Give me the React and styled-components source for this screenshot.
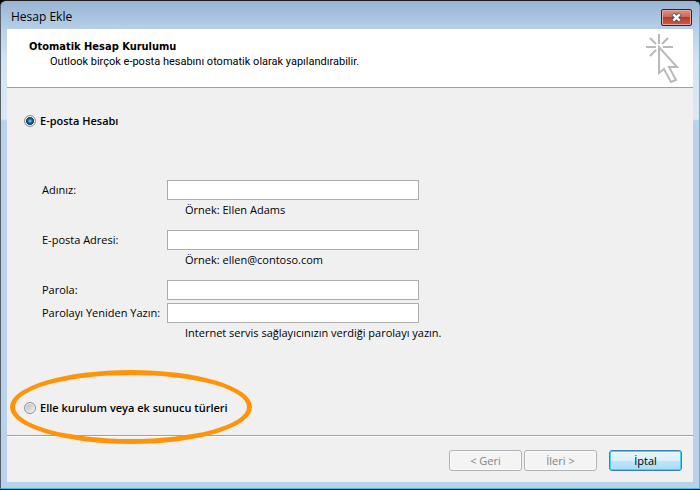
import React, { useState } from 'react'
import styled, { createGlobalStyle } from 'styled-components'

const GlobalStyle = createGlobalStyle`
  * {
    box-sizing: border-box;
  }
  body {
    margin: 0;
    background: #000;
    color: #000;
    font-family: 'Open Sans', 'Noto Sans', sans-serif;
    font-size: 11px;
    line-height: 20px;
  }
`

const Window = styled.div`
  display: flex;
  flex-direction: column;
  min-height: calc(100vh - 1px);
  padding: 0 6px 6px;
  border: 1px solid #1c1c1c;
  border-color: #1c1c1c #2fcbe8 #2fcbe8 #54606c;
  border-radius: 6px 6px 0 0;
  background: linear-gradient(#98b4d1, #b9d1ea 29px, #d3e3f3 60px, #dbe8f5 118px, #b9d1ea 120px);
`

const TitleBar = styled.div`
  display: flex;
  justify-content: space-between;
  align-items: center;
  height: 28px;
  padding: 4px 1px 0 4px;
`

const WindowTitle = styled.h1`
  margin: 0;
  font-size: 12px;
  font-weight: 400;
`

const CloseButton = styled.button`
  display: flex;
  justify-content: center;
  align-items: center;
  width: 31px;
  height: 17px;
  padding: 0;
  border: 1px solid #4a1c20;
  border-radius: 2px;
  box-shadow: inset 0 0 0 1px #e6a79c;
  background: linear-gradient(#dd9184, #cd6a5a 45%, #b63c2a 50%, #cb5d48);
`

const Dialog = styled.form`
  display: flex;
  flex-direction: column;
  flex: 1;
  background: #f0f0f0;
`

const Header = styled.header`
  display: flex;
  justify-content: space-between;
  height: 59px;
  padding: 4px 12px 0 22px;
  border-bottom: 1px solid #a0a0a0;
  background: #fff;
  line-height: 15px;
`

const HeaderText = styled.div`
  padding-top: 6px;
`

const Title = styled.h2`
  margin: 0;
  font-family: 'DejaVu Sans Condensed', 'DejaVu Sans', sans-serif;
  font-size: 11px;
`

const Subtitle = styled.p`
  margin: 0 0 0 21px;
  font-family: Roboto, sans-serif;
`

const Content = styled.main`
  flex: 1;
  padding: 23px 17px 0;
`

const RadioRow = styled.div`
  position: relative;
  display: flex;
  align-items: center;
  gap: 4px;
  font-weight: 600;
`

const Radio = styled.input`
  appearance: none;
  width: 12px;
  height: 12px;
  margin: 0;
  border: 1px solid #8e8f8f;
  border-radius: 50%;
  box-shadow: inset 0 0 0 1px #f4f4f4;
  background: linear-gradient(135deg, #b4b9be, #f4f4f4);
  &:checked {
    background: radial-gradient(circle at 5px 5px, #8fdcf5 0, #1d6c9c 2px, #0b2f52 4px, #d5dade 4px);
  }
`

const Highlight = styled.span`
  position: absolute;
  top: -28px;
  left: -14px;
  width: 242px;
  height: 74px;
  border: 5px solid #ff9409;
  border-radius: 50%;
  pointer-events: none;
`

const Fields = styled.div`
  display: flex;
  flex-direction: column;
  gap: 10px;
  margin: 49px 0 55px 18px;
`

const Group = styled.div`
  display: flex;
  flex-direction: column;
`

const Field = styled.div`
  display: grid;
  grid-template-columns: 125px minmax(0, 252px);
  & + & {
    margin-top: 3px;
  }
`

const TextBox = styled.input`
  width: 100%;
  height: 20px;
  padding: 0 4px;
  border: 1px solid #abadb3;
  background: #fff;
  font: inherit;
`

const Hint = styled.p`
  margin: 0 0 0 143px;
`

const Footer = styled.footer`
  display: flex;
  justify-content: flex-end;
  gap: 2px;
  padding: 14px 11px 11px;
  border-top: 1px solid #a0a0a0;
  box-shadow: inset 0 1px #fff;
`

const Button = styled.button`
  width: 73px;
  height: 21px;
  padding: 0;
  border: 1px solid #3c7fb1;
  border-radius: 3px;
  box-shadow: inset 0 0 0 1px #48d1f5;
  background: linear-gradient(#e9f5fc, #d9f0fc 50%, #bee6fd 50%, #a9dbf5);
  color: #000;
  font: inherit;
  line-height: 19px;
  &:disabled {
    border-color: #adb2b5;
    box-shadow: inset 0 0 0 1px #fbfbfb;
    background: #f4f4f4;
    color: #838383;
  }
`

const CancelButton = styled(Button)`
  margin-left: 10px;
`

const CloseIcon = () => (
  <svg width="13" height="11" viewBox="0 0 13 11" aria-hidden="true">
    <path d="M3 2l7 7M10 2l-7 7" stroke="#4c4f60" strokeWidth="4.4" />
    <path d="M3.3 2.3l6.4 6.4M9.7 2.3l-6.4 6.4" stroke="#fff" strokeWidth="2.4" />
  </svg>
)

const CursorIcon = () => (
  <svg width="36" height="52" viewBox="0 0 36 52" fill="none" stroke="#b9b9b9" strokeWidth="2" aria-hidden="true">
    <path d="M14 1v10M1 14h10M18 14h10M5 5l6 6M23 5l-6 6M5 23l6-6" />
    <path d="M14 14v26l5-4 7 13 5-2-7-13h8z" />
  </svg>
)

const App = () => {
  const [mode, setMode] = useState('email')

  return (
    <>
      <GlobalStyle />
      <Window>
        <TitleBar>
          <WindowTitle>Hesap Ekle</WindowTitle>
          <CloseButton type="button" aria-label="Kapat"><CloseIcon /></CloseButton>
        </TitleBar>
        <Dialog onSubmit={e => e.preventDefault()}>
          <Header>
            <HeaderText>
              <Title>Otomatik Hesap Kurulumu</Title>
              <Subtitle>Outlook birçok e-posta hesabını otomatik olarak yapılandırabilir.</Subtitle>
            </HeaderText>
            <CursorIcon />
          </Header>
          <Content>
            <RadioRow>
              <Radio type="radio" name="mode" id="email-mode" checked={mode === 'email'} onChange={() => setMode('email')} />
              <label htmlFor="email-mode">E-posta Hesabı</label>
            </RadioRow>
            <Fields>
              <Group>
                <Field>
                  <label htmlFor="name">Adınız:</label>
                  <TextBox id="name" type="text" />
                </Field>
                <Hint>Örnek: Ellen Adams</Hint>
              </Group>
              <Group>
                <Field>
                  <label htmlFor="email">E-posta Adresi:</label>
                  <TextBox id="email" type="email" />
                </Field>
                <Hint>Örnek: ellen@contoso.com</Hint>
              </Group>
              <Group>
                <Field>
                  <label htmlFor="password">Parola:</label>
                  <TextBox id="password" type="password" />
                </Field>
                <Field>
                  <label htmlFor="password-again">Parolayı Yeniden Yazın:</label>
                  <TextBox id="password-again" type="password" />
                </Field>
                <Hint>Internet servis sağlayıcınızın verdiği parolayı yazın.</Hint>
              </Group>
            </Fields>
            <RadioRow>
              <Radio type="radio" name="mode" id="manual-mode" checked={mode === 'manual'} onChange={() => setMode('manual')} />
              <label htmlFor="manual-mode">Elle kurulum veya ek sunucu türleri</label>
              <Highlight />
            </RadioRow>
          </Content>
          <Footer>
            <Button type="button" disabled>&lt; Geri</Button>
            <Button type="submit" disabled>İleri &gt;</Button>
            <CancelButton type="button">İptal</CancelButton>
          </Footer>
        </Dialog>
      </Window>
    </>
  )
}

export default App
